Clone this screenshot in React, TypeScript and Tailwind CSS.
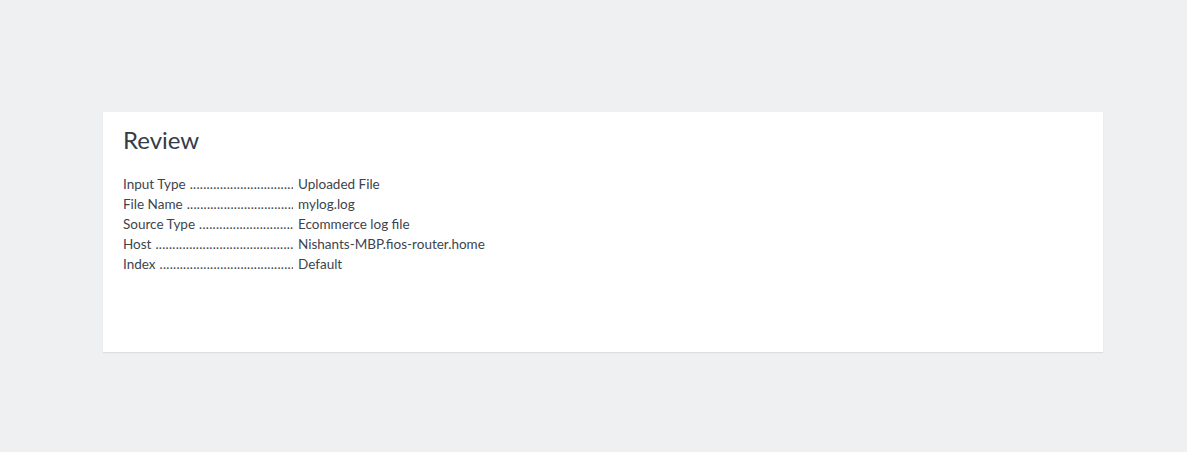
const rows: [string, string][] = [
  ['Input Type', 'Uploaded File'],
  ['File Name', 'mylog.log'],
  ['Source Type', 'Ecommerce log file'],
  ['Host', 'Nishants-MBP.fios-router.home'],
  ['Index', 'Default'],
];

const dots = '.'.repeat(80);

const App = () => {
  return (
    <div className="min-h-[452px] w-full bg-[#eff0f2] pt-[112px] font-['Lato',sans-serif]">
      <div className="ml-[103px] h-[240px] w-[1000px] bg-white px-5 pt-[14px] shadow-[0_1px_1px_rgba(0,0,0,0.08)]">
        <h2 className="text-[24px] leading-[28px] text-[#333c48]">Review</h2>
        <div className="mt-[20px] text-[13.5px] leading-[20px] text-[#3c444d]">
          {rows.map(([label, value]) => (
            <div key={label} className="flex">
              <div className="flex w-[170px] shrink-0 overflow-hidden whitespace-nowrap">
                <span className="shrink-0">{label}</span>
                <span
                  aria-hidden
                  className="ml-1 min-w-0 flex-1 overflow-hidden text-[13px] tracking-[0.3px]"
                >
                  {dots}
                </span>
              </div>
              <span className="ml-[5px]">{value}</span>
            </div>
          ))}
        </div>
      </div>
    </div>
  );
};

export default App;
